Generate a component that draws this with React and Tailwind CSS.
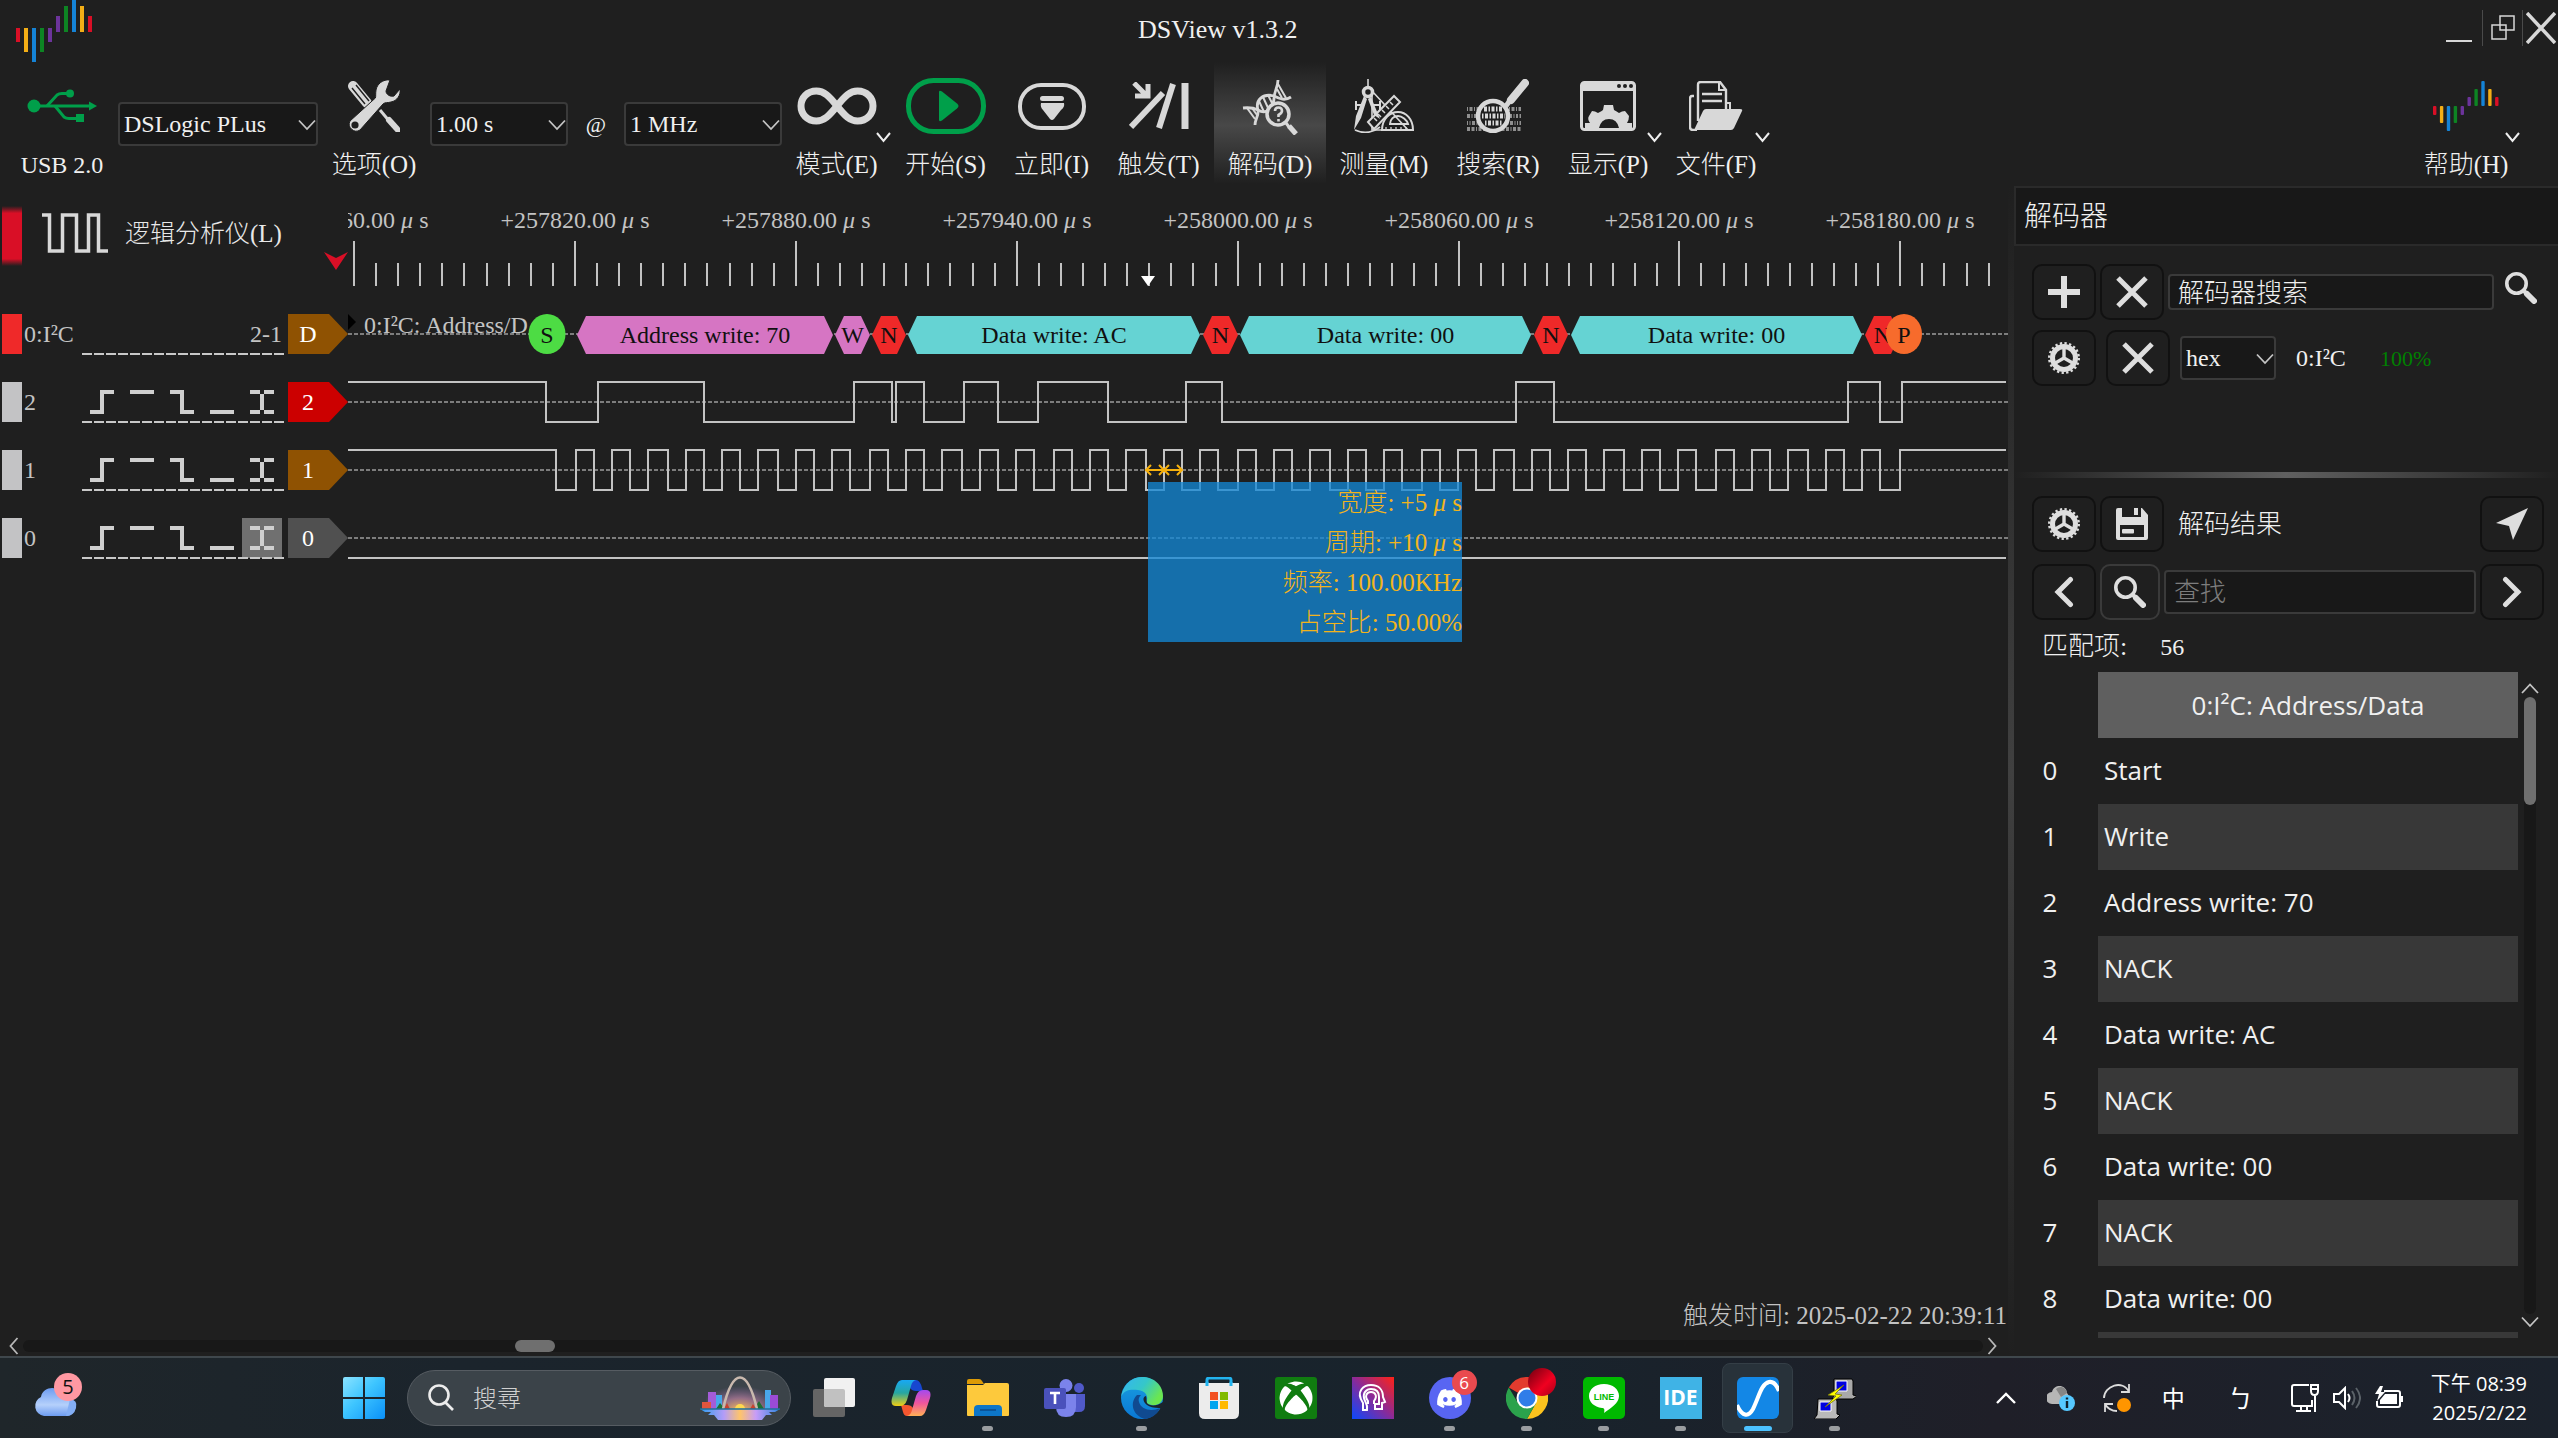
import React from "react";
import { FaDiscord, FaXbox } from "react-icons/fa6";

const SERIF = "font-['Liberation_Serif','Noto_Sans_CJK_SC',serif]";
const SANS = "font-['Open_Sans','Noto_Sans_CJK_TC',sans-serif]";
const FG = "#d8d8d8";

/* ---------- small shared drawings ---------- */

function Chevron({ className = "", dir = "down" }) {
  const d = {
    down: "M1 1.5 9 10l8-8.5",
    up: "M1 10 9 1.5l8 8.5",
    left: "M8.5 1 1.5 9l7 8",
    right: "M1.5 1l7 8-7 8",
  }[dir];
  const side = dir === "left" || dir === "right";
  return (
    <svg
      className={className}
      width={side ? 10 : 18}
      height={side ? 18 : 12}
      viewBox={side ? "0 0 10 18" : "0 0 18 12"}
      fill="none"
      stroke="currentColor"
      strokeWidth="1.800"
      aria-hidden="true"
    >
      <path d={d} />
    </svg>
  );
}

const LOGO_BARS = [
  ["#d90f26", 28, 14], ["#f3ae16", 28, 24], ["#1583d6", 28, 34], ["#0d8423", 28, 24], ["#6c349b", 28, 14],
  ["#6c349b", 16, 16], ["#0d8423", 6, 26], ["#1583d6", 0, 32], ["#f3ae16", 6, 26], ["#d90f26", 16, 16],
];

function Logo() {
  return (
    <svg width="78" height="62" viewBox="0 0 78 62" aria-label="DSView">
      {LOGO_BARS.map(([c, y, h], i) => (
        <rect key={i} x={i * 8} y={y} width="4" height={h} fill={c} />
      ))}
    </svg>
  );
}

const HELP_BARS = [
  ["#d90f26", 25, 9], ["#f3ae16", 25, 17], ["#1583d6", 25, 25], ["#0d8423", 25, 17], ["#6c349b", 25, 9],
  ["#6c349b", 16, 9], ["#0d8423", 8, 17], ["#1583d6", 0, 25], ["#f3ae16", 8, 17], ["#d90f26", 16, 9],
];

function HelpIcon() {
  return (
    <svg width="66" height="50" viewBox="0 0 66 50">
      {HELP_BARS.map(([c, y, h], i) => (
        <rect key={i} x={i * 6.9} y={y} width="3.4" height={h} rx="1" fill={c} />
      ))}
    </svg>
  );
}

function UsbIcon() {
  return (
    <svg width="70" height="34" viewBox="0 0 70 34" fill="none" stroke="#009f4a" strokeWidth="3">
      <circle cx="7" cy="17" r="6.5" fill="#009f4a" stroke="none" />
      <path d="M7 17h56" />
      <path d="M20 17 30 6q2-1.500 5-1.500h7" />
      <path d="M28 17 37 28q2 1.500 5 1.500h8" />
      <circle cx="43" cy="4.500" r="4" fill="#009f4a" stroke="none" />
      <path d="M49 25h8v8h-8z" fill="#009f4a" stroke="none" />
      <path d="M62 12.500 70 17l-8 4.500z" fill="#009f4a" stroke="none" />
    </svg>
  );
}

function ToolsIcon() {
  return (
    <svg width="52" height="52" viewBox="0 0 52 52">
      <g stroke={FG} fill="none">
        <path d="M5 6 19 23" strokeWidth="10" strokeLinecap="round" />
        <path d="M4 8 17 24M8 5l13 16" stroke="#1f1f1f" strokeWidth="1.400" />
        <path d="M32 30l10 12" strokeWidth="3" />
        <path d="M41 40l9 10" strokeWidth="6" strokeLinecap="round" />
      </g>
      <path
        d="M42 0c-7-1-13 4-14 10-.6 4 0 6-.6 8L2 41a7 7 0 0 0 10 9l23-26c2-2 5-1 8-2 6-1 10-7 9-13l-6 7c-3 1-8-1-8-5z"
        fill={FG}
        stroke="#1f1f1f"
        strokeWidth="1"
      />
      <circle cx="7" cy="45" r="3.600" fill="#1f1f1f" />
    </svg>
  );
}

function LoopIcon() {
  return (
    <svg width="80" height="38" viewBox="0 0 80 38" fill="none" stroke={FG} strokeWidth="7">
      <path d="M40 19C32 9 27 4 19.500 4 10 4 4 11 4 19s6 15 15.500 15C27 34 32 29 40 19S53 4 60.500 4C70 4 76 11 76 19s-6 15-15.500 15C53 34 48 29 40 19z" />
    </svg>
  );
}

function StartIcon() {
  return (
    <svg width="80" height="56" viewBox="0 0 80 56">
      <rect x="2.500" y="2.500" width="75" height="51" rx="25" fill="none" stroke="#009f4a" strokeWidth="5" />
      <path d="M33 14q0-2 3-.5l15 12q3 2.500 0 5l-15 12q-3 1.500-3-.5z" fill="#009f4a" />
    </svg>
  );
}

function InstantIcon() {
  return (
    <svg width="68" height="47" viewBox="0 0 68 47">
      <rect x="2" y="2" width="64" height="43" rx="21" fill="none" stroke={FG} strokeWidth="4" />
      <rect x="22" y="13" width="24" height="5" rx="2.500" fill={FG} />
      <path d="M23 20h23q1 4-3 7l-7 9q-2 2-4 0l-7-9q-3-3-2-7z" fill={FG} />
    </svg>
  );
}

function TriggerIcon() {
  return (
    <svg width="60" height="48" viewBox="0 0 60 48" stroke={FG} fill="none">
      <path d="M5 1 17 13M6 14h13V2" strokeWidth="5" />
      <path d="M2 45 34 11" strokeWidth="6" />
      <path d="M30 46 44 2" strokeWidth="6" />
      <path d="M56 1v46" strokeWidth="7" />
    </svg>
  );
}

function DecodeIcon() {
  return (
    <svg width="56" height="56" viewBox="0 0 56 56" stroke={FG} fill="none">
      <path d="M1 29q9-1 15 2c8 5 15-1 16-11 0-8 4-12 4-19" strokeWidth="2.800" />
      <path d="M13 46c0-6 4-9 3-15-3-10 5-17 16-14 6 3 11 5 17 1" strokeWidth="2.800" />
      <path d="M5 29l8 11M10 29l5 7M17 22l5 11M21 18l6 13M26 16l5 10M35 10l5 9M36 5l8 14" strokeWidth="2" />
      <circle cx="36" cy="35" r="11" fill="#3d3d3d" strokeWidth="3.500" />
      <path d="M44 44l3 4" strokeWidth="3" />
      <path d="M47 47l7 8" strokeWidth="5" />
      <path d="M33 32q0-3.500 3.500-3.500T40 32q0 2-3.500 4v2M36.500 40v2.500" strokeWidth="2.600" />
    </svg>
  );
}

function MeasureIcon() {
  return (
    <svg width="60" height="54" viewBox="0 0 60 54" stroke={FG} fill="none">
      <path d="M18 51V12L54 51z" strokeWidth="1.600" />
      <path d="M28 51c0-11 8-18 16-18s15 7 15 18z" strokeWidth="2" />
      <path d="M36 45c0-5 4-8 8-8s9 4 10 8z" strokeWidth="2" />
      <path d="M14 43 40 17l6 6-26 27z" strokeWidth="2" fill="#1f1f1f" />
      <path d="M20 39l3 3M24 35l3 3M28 31l3 3M32 27l3 3M36 23l3 3" strokeWidth="1.500" />
      <path d="M32 51v-3M37 51v-3M42 51v-3M47 51v-3M52 51v-3" strokeWidth="1.300" />
      <path d="M14 0v9" strokeWidth="1.600" />
      <circle cx="14" cy="13" r="4.500" strokeWidth="3.500" />
      <path d="M2 22v9M2 26h8M19 26h7M26 22v9" strokeWidth="2" />
      <path d="M10 17 2 37 0 51l7-12 6-19zM17 18l9 22-6-4-6-16z" fill={FG} stroke="none" />
      <path d="M1 51q13 6 25-3" strokeWidth="1.800" />
    </svg>
  );
}

function SearchDataIcon() {
  return (
    <svg width="62" height="54" viewBox="0 0 62 54">
      <g fill="none" stroke="#8f8f8f" strokeWidth="4">
        <path d="M0 30h54" strokeDasharray="1 1.500 3 1.500" />
        <path d="M0 37h54" strokeDasharray="3 1.500 1 1.500 2 1.500" />
        <path d="M0 44h54" strokeDasharray="1 1.500 1 1.500 3 1.500" />
        <path d="M0 50h54" strokeDasharray="3 1.500 3 1.500 1 1.500" />
      </g>
      <path d="M58 4 44 21" stroke={FG} strokeWidth="8" strokeLinecap="round" />
      <path d="M44 20l-5 7" stroke={FG} strokeWidth="5" />
      <circle cx="26" cy="37" r="15" fill="#1f1f1f" stroke={FG} strokeWidth="4.500" />
      <g fill="none" stroke={FG} strokeWidth="5">
        <path d="M17 30h19" strokeDasharray="3 1.500 1.500 1.500" />
        <path d="M15 37h23" strokeDasharray="1.500 1.500 3 1.500" />
        <path d="M18 44h18" strokeDasharray="1.500 1.500 3 1.500" />
      </g>
    </svg>
  );
}

function DisplayIcon() {
  return (
    <svg width="56" height="50" viewBox="0 0 56 50">
      <rect x="1.500" y="1.500" width="53" height="47" rx="3" fill="none" stroke={FG} strokeWidth="3" />
      <path d="M1 2h54v8H1z" fill={FG} />
      <g fill="#1f1f1f">
        <circle cx="39" cy="5" r="2" />
        <circle cx="45" cy="5" r="2" />
        <circle cx="51" cy="5" r="2" />
      </g>
      <path
        d="M5 47v-5h5q-3-4-1-7l3-5q3 0 6 2 4-2 5-3l1-5h9l1 5q2 1 5 3 3-2 6-2l4 5q0 4-2 7h5v5H39q-2-9-10-9t-10 9z"
        fill={FG}
      />
    </svg>
  );
}

function FileIcon() {
  return (
    <svg width="54" height="50" viewBox="0 0 54 50" fill="none" stroke={FG}>
      <path d="M5 15H3q-2 0-2 3v28q0 3 3 3h4" strokeWidth="2.400" />
      <path d="M9 40V4q0-3 3-3h19l6 8v19" strokeWidth="2.400" />
      <path d="M30 1v8h7" strokeWidth="2" />
      <path d="M13 13h20M13 20h20" strokeWidth="2.600" />
      <path d="M37 22h4v6" strokeWidth="2" />
      <path d="M17 28h34q3 0 2 2l-8 17q-1 2-3 2H7q-2 0-1-2l8-17q1-2 3-2z" fill={FG} stroke="none" />
    </svg>
  );
}

function Gear() {
  return (
    <svg width="32" height="32" viewBox="0 0 32 32" fill="none" stroke="#dedede">
      <circle cx="16" cy="16" r="14.800" strokeWidth="2.400" strokeDasharray="2.325 2.325" />
      <circle cx="16" cy="16" r="11.500" strokeWidth="5" />
      <path d="M16 16V5M16 16l9.500 5.500M16 16l-9.500 5.500" strokeWidth="3.400" />
    </svg>
  );
}

function Magnifier() {
  return (
    <svg width="32" height="32" viewBox="0 0 32 32" fill="none" stroke="#dedede">
      <circle cx="11.500" cy="11.500" r="9.700" strokeWidth="3.600" />
      <path d="M18 18l4 4" strokeWidth="4" />
      <path d="M22 22l7 7" strokeWidth="6" strokeLinecap="round" />
    </svg>
  );
}

function Cross() {
  return (
    <svg width="32" height="32" viewBox="0 0 32 32" stroke="#dedede" strokeWidth="5">
      <path d="M2 2l28 28M30 2 2 30" />
    </svg>
  );
}

function Plus() {
  return (
    <svg width="32" height="32" viewBox="0 0 32 32" stroke="#dedede" strokeWidth="6">
      <path d="M16 0v32M0 16h32" />
    </svg>
  );
}

function Angle({ flip }) {
  return (
    <svg width="20" height="32" viewBox="0 0 20 32" fill="none" stroke="#dedede" strokeWidth="5" strokeLinecap="round">
      <path d={flip ? "M3.500 3.500 16 16 3.500 28.500" : "M16.500 3.500 4 16l12.500 12.500"} />
    </svg>
  );
}

function SaveIcon() {
  return (
    <svg width="32" height="32" viewBox="0 0 32 32">
      <path d="M0 2q0-2 2-2h4v9h19V0h1l6 7v23q0 2-2 2H2q-2 0-2-2z" fill="#dedede" />
      <path d="M18 0h4v7h-4z" fill="#dedede" />
      <path d="M4 17h24v12H4z" fill="#1f1f1f" />
      <rect x="6" y="21" width="12" height="4.500" rx="1" fill="#dedede" />
    </svg>
  );
}

/* ---------- top of the window ---------- */

function TitleBar() {
  return (
    <header className="relative flex h-[60px] shrink-0 justify-between">
      <div className="h-[62px] pl-4">
        <Logo />
      </div>
      <h1 className={"absolute left-1/2 top-[14px] -translate-x-[141px] text-[26px] leading-[32px] " + SERIF}>
        DSView v1.3.2
      </h1>
      <div className="flex items-start text-[#d8d8d8]">
        <button aria-label="Minimize" className="flex h-[46px] w-[36px] items-end pb-[4px]">
          <span className="h-[2px] w-[26px] bg-[#d8d8d8]" />
        </button>
        <span className="mt-[10px] h-9 w-px bg-[#4a4a4a]" />
        <button aria-label="Restore" className="flex h-[56px] w-[39px] items-center justify-center">
          <svg width="24" height="26" viewBox="0 0 24 26" fill="none" stroke="#d8d8d8" strokeWidth="1.500">
            <path d="M9 1h14v14H9zM1 10h14v14H1z" />
          </svg>
        </button>
        <span className="mt-[10px] h-9 w-px bg-[#4a4a4a]" />
        <button aria-label="Close" className="flex h-[56px] w-[35px] items-center justify-center">
          <svg width="30" height="32" viewBox="0 0 30 32" stroke="#d8d8d8" strokeWidth="3.500">
            <path d="M1 1l28 30M29 1 1 31" />
          </svg>
        </button>
      </div>
    </header>
  );
}

function Combo({ label, value, width }) {
  return (
    <div className={"relative shrink-0 " + width}>
      <select
        aria-label={label}
        defaultValue={value}
        className="h-[44px] w-full appearance-none rounded-[4px] border-2 border-[#3a3a3a] bg-[#181818] pl-1 text-[24px] text-[#f0f0f0] outline-none"
      >
        <option>{value}</option>
      </select>
      <Chevron className="pointer-events-none absolute right-[2px] top-[17px] text-[#c4c4c4]" />
    </div>
  );
}

function ToolButton({ label, icon, width, menu, active }) {
  return (
    <button
      className={
        "relative flex h-[122px] shrink-0 flex-col items-center " +
        width +
        (active ? " bg-[linear-gradient(#1f1f1f,#484848_52%,#1f1f1f)] pt-[6px]" : " pt-1")
      }
    >
      <span className="flex h-[80px] items-center">{icon}</span>
      <span className="whitespace-nowrap text-[25px] leading-[38px]">{label}</span>
      {menu && (
        <svg className="absolute right-0 top-[70px]" width="15" height="11" viewBox="0 0 15 11" fill="none" stroke="#eee" strokeWidth="2">
          <path d="M1 1l6.500 8L14 1" />
        </svg>
      )}
    </button>
  );
}

function Toolbar() {
  return (
    <nav className={"flex h-[126px] shrink-0 items-start pt-[2px] " + SERIF}>
      <div className="flex h-[122px] w-[118px] shrink-0 flex-col items-center pl-[6px] pt-1">
        <span className="flex h-[80px] items-center">
          <UsbIcon />
        </span>
        <span className="text-[24px] leading-[38px]">USB 2.0</span>
      </div>
      <div className="flex shrink-0 items-start">
        <div className="pt-10">
          <Combo label="Device" value="DSLogic PLus" width="w-[200px]" />
        </div>
        <ToolButton label="选项(O)" icon={<ToolsIcon />} width="w-[112px]" />
        <div className="flex items-center pt-10">
          <Combo label="Sample duration" value="1.00 s" width="w-[138px]" />
          <span className="w-[56px] text-center text-[22px]">@</span>
          <Combo label="Sample rate" value="1 MHz" width="w-[158px]" />
        </div>
      </div>
      <ToolButton label="模式(E)" icon={<LoopIcon />} width="w-[109px]" menu />
      <ToolButton label="开始(S)" icon={<StartIcon />} width="w-[109px]" />
      <ToolButton label="立即(I)" icon={<InstantIcon />} width="w-[103px]" />
      <ToolButton label="触发(T)" icon={<TriggerIcon />} width="w-[111px]" />
      <ToolButton label="解码(D)" icon={<DecodeIcon />} width="w-[112px]" active />
      <ToolButton label="测量(M)" icon={<MeasureIcon />} width="w-[116px]" />
      <ToolButton label="搜索(R)" icon={<SearchDataIcon />} width="w-[112px]" />
      <ToolButton label="显示(P)" icon={<DisplayIcon />} width="w-[108px]" menu />
      <ToolButton label="文件(F)" icon={<FileIcon />} width="w-[108px]" menu />
      <div className="ml-auto pr-[38px]">
        <ToolButton label="帮助(H)" icon={<HelpIcon />} width="w-[108px]" menu />
      </div>
    </nav>
  );
}

/* ---------- channel list ---------- */

const TRIGGERS = [
  ["Rising edge", "M0 22h14M12 24V0M10 2h14"],
  ["High level", "M0 2h24"],
  ["Falling edge", "M0 2h14M12 0v24M10 22h14"],
  ["Low level", "M0 22h24"],
  ["Either edge", "M0 2h10M14 2h10M0 22h10M14 22h10M12 4v16"],
];

function ChannelRow({ name, note, tag, color, chip, selected }) {
  return (
    <div className="flex h-[68px] items-center pl-[2px]">
      <span className="h-[40px] w-5" style={{ backgroundColor: chip }} />
      <span className="w-[60px] whitespace-nowrap pl-[2px] text-[24px]">{name}</span>
      <span className="relative flex h-[40px] w-[202px] items-center">
        {note ? (
          <span className="ml-auto pr-[2px] text-[24px]">{note}</span>
        ) : (
          TRIGGERS.map(([title, d], i) => (
            <button
              key={title}
              aria-label={title + " " + tag}
              className={"flex h-[40px] w-[40px] items-center justify-center " + (selected === i ? "bg-[#707070]" : "")}
            >
              <svg width="24" height="24" viewBox="0 0 24 24" stroke="#cfcfcf" strokeWidth="4" fill="none">
                <path d={d} />
              </svg>
            </button>
          ))
        )}
        <svg className="absolute -bottom-px left-0 h-[2px] w-full">
          <path d="M0 1h202" stroke="#c8c8c8" strokeWidth="2" strokeDasharray="10 2" />
        </svg>
      </span>
      <span className="relative ml-1 flex h-[40px] w-[60px] items-center text-white">
        <svg className="absolute inset-0" width="60" height="40" viewBox="0 0 60 40">
          <path d="M0 0h41l19 20-19 20H0z" fill={color} />
        </svg>
        <span className="relative w-[40px] text-center text-[24px]">{tag}</span>
      </span>
    </div>
  );
}

function ChannelList() {
  return (
    <div className="w-[348px] shrink-0 text-[#c3c3c3]">
      <div className="relative flex h-[114px] items-start pl-[2px] pt-[20px]">
        <span className="h-[60px] w-5 bg-[linear-gradient(#1f1f1f,#d90f26_12%,#d90f26_88%,#1f1f1f)]" />
        <svg className="ml-5 mt-[7px]" width="66" height="40" viewBox="0 0 66 40" fill="none" stroke="#d8d8d8" strokeWidth="3.500">
          <path d="M0 2h7.500v36h13V2h14v36h12V2h10v36H66" />
        </svg>
        <button className="ml-[17px] mt-[9px] whitespace-nowrap text-[25px] leading-[38px] text-[#e8e8e8]">逻辑分析仪(L)</button>
        <svg className="absolute right-0 top-[66px]" width="24" height="18" viewBox="0 0 24 18">
          <path d="M0 0l12 6 12-6-12 18z" fill="#d90f26" />
        </svg>
      </div>
      <ChannelRow name="0:I²C" note="2-1" tag="D" color="#8f5202" chip="#ef2929" />
      <ChannelRow name="2" tag="2" color="#cc0000" chip="#c3c3c5" />
      <ChannelRow name="1" tag="1" color="#8f5202" chip="#c3c3c5" />
      <ChannelRow name="0" tag="0" color="#505050" chip="#c3c3c5" selected={4} />
    </div>
  );
}

/* ---------- ruler and traces ---------- */

const TICK_START = 6;
const TICK_STEP = 22.09;
const RULER_LABELS = [
  "+257760.00", "+257820.00", "+257880.00", "+257940.00", "+258000.00", "+258060.00", "+258120.00", "+258180.00",
];

const SDA = [198, 250, 356, 506, 544, 548, 576, 616, 650, 690, 760, 838, 874, 1168, 1206, 1500, 1532, 1554];
const SCL = [
  208, 228, 246, 264, 282, 300, 320, 338, 356, 374, 392, 410, 430, 448, 466, 484, 502, 522, 540, 558, 576, 594, 614,
  632, 650, 668, 686, 706, 724, 742, 760, 778, 798, 816, 834, 852, 870, 890, 908, 926, 944, 962, 982, 1000, 1018, 1036,
  1054, 1074, 1092, 1110, 1128, 1146, 1166, 1184, 1202, 1220, 1238, 1256, 1276, 1294, 1312, 1330, 1348, 1368, 1386,
  1404, 1422, 1440, 1460, 1478, 1496, 1514, 1532, 1552,
];

const TRACE_END = 1658;

function tracePath(edges, high) {
  let d = "M0 " + high;
  edges.forEach((x, i) => {
    d += "H" + x + "V" + (i % 2 === 0 ? high + 40 : high);
  });
  return d + "H" + TRACE_END;
}

const PINK = "#d675c3";
const TEAL = "#65d3d3";
const RED = "#ef2929";
const FRAMES = [
  [229, 485, "Address write: 70", PINK],
  [487, 522, "W", PINK],
  [524, 558, "N", RED],
  [560, 852, "Data write: AC", TEAL],
  [855, 890, "N", RED],
  [892, 1183, "Data write: 00", TEAL],
  [1186, 1220, "N", RED],
  [1223, 1514, "Data write: 00", TEAL],
  [1517, 1552, "N", RED],
];

function Frame({ x1, x2, text, fill }) {
  return (
    <g>
      <path d={`M${x1} 149l9-19H${x2 - 9}l9 19-9 19H${x1 + 9}z`} fill={fill} />
      <text x={(x1 + x2) / 2} y="157" textAnchor="middle" fontSize="24" fill="#101010">
        {text}
      </text>
    </g>
  );
}

function Waveform() {
  return (
    <svg className="block h-[460px] w-full">
      <g stroke="#c3c3c3" strokeWidth="2">
        {Array.from({ length: 75 }, (_, i) => {
          const x = Math.round(TICK_START + i * TICK_STEP);
          return <path key={i} d={`M${x} ${i % 10 === 0 ? 55 : 77}V100`} />;
        })}
      </g>
      <g fill="#c3c3c3" fontSize="24">
        {RULER_LABELS.map((t, i) => (
          <text key={t} x={Math.round(TICK_START + i * 10 * TICK_STEP)} y="42" textAnchor="middle">
            {t} <tspan fontStyle="italic">μ</tspan> s
          </text>
        ))}
      </g>
      <path d="M793 90h14l-7 10z" fill="#fff" />

      <g stroke="#7d7d7d" strokeWidth="2" strokeDasharray="4 2">
        <path d="M0 148H1660" />
        <path d="M0 216H1660" />
        <path d="M0 284H1660" />
        <path d="M0 352H1660" />
      </g>
      <g fill="none" stroke="#c3c3c3" strokeWidth="2">
        <path d={tracePath(SDA, 196)} />
        <path d={tracePath(SCL, 264)} />
        <path d={`M0 372H${TRACE_END}`} />
      </g>

      <path d="M0 128l8 8-8 8z" fill="#000" />
      <text x="16" y="147" fontSize="24" fill="#c3c3c3">0:I²C: Address/D</text>
      <ellipse cx="199" cy="148" rx="18.500" ry="20" fill="#4ddc44" />
      <text x="199" y="157" textAnchor="middle" fontSize="24" fill="#101010">S</text>
      {FRAMES.map(([x1, x2, text, fill]) => (
        <Frame key={x1} x1={x1} x2={x2} text={text} fill={fill} />
      ))}
      <ellipse cx="1556" cy="148" rx="18" ry="20" fill="#f76b2c" />
      <text x="1556" y="157" textAnchor="middle" fontSize="24" fill="#101010">P</text>

      <g fill="none" stroke="#f7b10e" strokeWidth="2">
        <path d="M798 284h36M803 279l-5 5 5 5M811 279l5 5-5 5M821 279l-5 5 5 5M829 279l5 5-5 5" />
      </g>
    </svg>
  );
}

function Scope() {
  return (
    <section className={"flex min-w-0 flex-1 flex-col " + SERIF}>
      <div className="flex min-h-0 flex-1">
        <ChannelList />
        <div className="relative min-w-0 flex-1">
          <Waveform />
          <div className="absolute left-[800px] top-[296px] h-[160px] w-[314px] bg-[rgb(18,135,214)]/77 pt-px text-right text-[25px] leading-[40px] text-[#f2b41c]">
            <p>宽度: +5 <i>μ</i> s</p>
            <p>周期: +10 <i>μ</i> s</p>
            <p>频率: 100.00KHz</p>
            <p>占空比: 50.00%</p>
          </div>
        </div>
      </div>
      <p className="pr-px text-right text-[25px] leading-[40px] text-[#c3c3c3]">触发时间: 2025-02-22 20:39:11</p>
      <div className="flex h-[20px] items-center gap-[4px] pl-[9px] pr-[11px] text-[#b8b8b8]">
        <Chevron dir="left" />
        <div className="flex h-[12px] min-w-0 flex-1 rounded-full bg-[#181818]">
          <div className="ml-[25.1%] h-[12px] w-10 rounded-[6px] bg-[#6f6f6f]" />
        </div>
        <Chevron dir="right" />
      </div>
    </section>
  );
}

/* ---------- decoder panel ---------- */

function IconButton({ label, children, width = "w-[64px]", border = "border-[#111]" }) {
  return (
    <button
      aria-label={label}
      className={"flex h-[56px] shrink-0 items-center justify-center rounded-[10px] border-2 " + width + " " + border}
    >
      {children}
    </button>
  );
}

const ROWS = [
  "Start", "Write", "Address write: 70", "NACK", "Data write: AC", "NACK", "Data write: 00", "NACK", "Data write: 00", "",
];

function DecoderPanel() {
  return (
    <aside className={"flex w-[544px] shrink-0 flex-col " + SERIF}>
      <h2 className="h-[60px] shrink-0 border-2 border-r-0 border-[#2a2a2a] bg-[#181818] pl-2 text-[28px] leading-[58px]">
        解码器
      </h2>
      <div className="flex h-[226px] shrink-0 flex-col gap-[10px] pl-[18px] pr-[14px] pt-[18px]">
        <div className="flex items-center gap-1">
          <IconButton label="Add decoder"><Plus /></IconButton>
          <IconButton label="Remove all decoders"><Cross /></IconButton>
          <input
            aria-label="解码器搜索"
            defaultValue="解码器搜索"
            className="h-[36px] min-w-0 flex-1 rounded-[4px] border-2 border-[#3a3a3a] bg-[#181818] px-2 pt-[2px] text-[26px] text-[#f0f0f0] outline-none"
          />
          <button aria-label="Search decoder" className="flex h-[56px] w-[46px] items-start justify-center pt-2">
            <Magnifier />
          </button>
        </div>
        <div className="flex items-center gap-[10px]">
          <IconButton label="Decoder settings"><Gear /></IconButton>
          <IconButton label="Remove decoder"><Cross /></IconButton>
          <Combo label="Format" value="hex" width="w-[96px]" />
          <span className="w-[84px] pl-[10px] text-[24px]">0:I²C</span>
          <span className="text-[22px] text-[#008000]">100%</span>
        </div>
      </div>
      <div className="h-[6px] shrink-0 bg-[linear-gradient(90deg,#1f1f1f,#606060_50%,#1f1f1f)]" />
      <div className="flex shrink-0 flex-col gap-[12px] pl-[18px] pr-[14px] pt-[18px]">
        <div className="flex items-center gap-1">
          <IconButton label="Result settings"><Gear /></IconButton>
          <IconButton label="Save results"><SaveIcon /></IconButton>
          <span className="flex-1 pl-[10px] text-[26px]">解码结果</span>
          <IconButton label="Jump to">
            <svg width="32" height="32" viewBox="0 0 32 32">
              <path d="M32 0 0 15l13 3 4 14z" fill="#dedede" />
            </svg>
          </IconButton>
        </div>
        <div className="flex items-center gap-1">
          <IconButton label="Previous match"><Angle /></IconButton>
          <IconButton label="Find" width="w-[60px]" border="border-[#3a3a3a]"><Magnifier /></IconButton>
          <input
            aria-label="查找"
            placeholder="查找"
            className="h-[44px] min-w-0 flex-1 rounded-[4px] border-2 border-[#3a3a3a] bg-[#181818] px-2 pt-[2px] text-[26px] outline-none placeholder:text-[#7d7d7d]"
          />
          <IconButton label="Next match"><Angle flip /></IconButton>
        </div>
      </div>
      <p className="h-[52px] shrink-0 pl-[28px] pt-1 text-[26px] leading-[46px]">
        匹配项:<span className="pl-[33px] text-[24px]">56</span>
      </p>
      <div className="mb-[18px] flex min-h-0 flex-1 overflow-hidden pl-[18px]">
        <table className={"flex-1 table-fixed border-collapse self-start text-[26px] font-normal " + SANS}>
          <colgroup>
            <col className="w-[66px]" />
            <col />
          </colgroup>
          <thead>
            <tr className="h-[66px]">
              <th />
              <th scope="col" className="bg-[#5f5f5f] text-center font-normal">0:I²C: Address/Data</th>
            </tr>
          </thead>
          <tbody>
            {ROWS.map((text, i) => (
              <tr key={i} className="h-[66px]">
                <th scope="row" className="pb-[2px] pr-[30px] text-center font-normal">{i < 9 ? i : ""}</th>
                <td className={"pb-[2px] pl-[6px] " + (i % 2 ? "bg-[#383838]" : "")}>{text}</td>
              </tr>
            ))}
          </tbody>
        </table>
        <div className="flex w-[40px] flex-col items-center pb-[10px] pr-[16px] pt-[11px] text-[#c4c4c4]">
          <Chevron dir="up" className="shrink-0" />
          <div className="my-[2px] w-[12px] flex-1 rounded-full bg-[#181818]">
            <div className="h-[108px] w-[12px] rounded-full bg-[#6f6f6f]" />
          </div>
          <Chevron className="shrink-0" />
        </div>
      </div>
    </aside>
  );
}

/* ---------- taskbar ---------- */

function WeatherIcon() {
  return (
    <svg width="52" height="46" viewBox="0 0 52 46">
      <defs>
        <linearGradient id="cl" x1="0" y1="0" x2="0" y2="1">
          <stop offset="0" stopColor="#6d9cf0" />
          <stop offset=".6" stopColor="#b5d0fb" />
          <stop offset="1" stopColor="#6d9cf0" />
        </linearGradient>
      </defs>
      <path d="M10 44a10 10 0 0 1-3-19C9 13 28 13 30 26a9 9 0 0 1 4 18z" fill="url(#cl)" />
      <path d="M36 27q8 1 6 9t-10 8" fill="#83aef5" />
      <circle cx="34" cy="15" r="14" fill="#ff98a2" />
      <text x="34" y="22" textAnchor="middle" fontSize="20" fill="#111">5</text>
    </svg>
  );
}

function StartLogo() {
  return (
    <svg width="42" height="42" viewBox="0 0 42 42">
      <defs>
        <linearGradient id="st" x1="0" y1="0" x2="1" y2="1">
          <stop offset="0" stopColor="#8be3ff" />
          <stop offset=".45" stopColor="#3ec5ff" />
          <stop offset="1" stopColor="#0a90f8" />
        </linearGradient>
      </defs>
      <path d="M2 0h18v20H0V2q0-2 2-2zM22 0h18q2 0 2 2v18H22zM0 22h20v20H2q-2 0-2-2zM22 22h20v18q0 2-2 2H22z" fill="url(#st)" />
    </svg>
  );
}

function ArchPicture() {
  return (
    <svg width="80" height="44" viewBox="0 0 80 44">
      <defs>
        <radialGradient id="glow" cx=".5" cy=".8" r=".6">
          <stop offset="0" stopColor="#ffc24d" />
          <stop offset=".5" stopColor="#b97fa0" stopOpacity=".7" />
          <stop offset="1" stopColor="#8a6aa8" stopOpacity="0" />
        </radialGradient>
        <linearGradient id="lake" x1="0" x2="1">
          <stop offset="0" stopColor="#2a9df0" />
          <stop offset=".3" stopColor="#b49cf8" />
          <stop offset=".5" stopColor="#ffc46a" />
          <stop offset=".7" stopColor="#c69cf8" />
          <stop offset="1" stopColor="#2a86e0" />
        </linearGradient>
      </defs>
      <ellipse cx="40" cy="22" rx="34" ry="20" fill="url(#glow)" />
      <path d="M8 16h8v17H8z" fill="#a45cd8" />
      <path d="M16 19h6v14h-6z" fill="#49a7ea" />
      <path d="M2 26h9v7H2z" fill="#e0553e" />
      <path d="M65 14h6v19h-6z" fill="#49a7ea" />
      <path d="M70 19h8v14h-8z" fill="#9b4bd6" />
      <path d="M16 33l4-6 5 6zM54 33l5-8 5 8z" fill="#1f6e33" />
      <path d="M24 33l3-6 3 6zM50 33l3-5 3 5z" fill="#c8412f" />
      <path d="M35 33a5 5 0 0 1 10 0z" fill="#ffd84f" />
      <path d="M23 33C28 12 34 1.500 40 1.500S52 12 57 33" fill="none" stroke="#c9b9ae" strokeWidth="2.600" />
      <path d="M0 33h80l-5 3h-6l3 3h-6l-4 5H18l-4-5H8l3-3H5z" fill="url(#lake)" />
      <path d="M0 33h80" stroke="#1c6f99" strokeWidth="1.500" />
    </svg>
  );
}

function TaskView() {
  return (
    <svg width="42" height="40" viewBox="0 0 42 40">
      <rect x="0" y="11" width="32" height="28" rx="2" fill="#656565" />
      <rect x="11" y="0" width="31" height="29" rx="2" fill="#f1f1f1" />
      <path d="M11 11h19q2 0 2 2v16H13q-2 0-2-2z" fill="#c1c1c1" />
    </svg>
  );
}

function Copilot() {
  return (
    <svg width="40" height="38" viewBox="0 0 40 38">
      <defs>
        <linearGradient id="cpa" x1="0" y1="0" x2="0" y2="1">
          <stop offset="0" stopColor="#18a8f5" />
          <stop offset=".5" stopColor="#27a6a0" />
          <stop offset="1" stopColor="#f2cf12" />
        </linearGradient>
        <linearGradient id="cpb" x1="0" y1="0" x2="0" y2="1">
          <stop offset="0" stopColor="#a44af0" />
          <stop offset=".5" stopColor="#f0559c" />
          <stop offset="1" stopColor="#ffb055" />
        </linearGradient>
      </defs>
      <path d="M18 1h7q4 0 6 8l1 3h-7q-4 0-6-3z" fill="#1747d0" />
      <path d="M22 37h-6q-3 0-4-4l-2-7h6q4 0 6 3z" fill="#f4562f" />
      <path d="M11 1h14q-4 1-5 6l-4 14q-2 6-7 6H5q-6 0-4-8l4-12q2-6 6-6z" fill="url(#cpa)" />
      <path d="M29 37H16q4-1 5-6l4-14q2-6 7-6h3q6 0 4 8l-4 12q-2 6-6 6z" fill="url(#cpb)" />
    </svg>
  );
}

function Explorer() {
  return (
    <svg width="42" height="38" viewBox="0 0 42 38">
      <path d="M0 2q0-2 2-2h10q2 0 3 2l2 3H0z" fill="#dc9a06" />
      <path d="M0 6h16l2-2h22q2 0 2 2v30q0 1-1 1H1q-1 0-1-1z" fill="#fdc93c" />
      <path d="M7 37v-7q0-4 4-4h20q4 0 4 4v7z" fill="#0d76c8" />
      <path d="M13 31h16" stroke="#0a559a" strokeWidth="2" />
    </svg>
  );
}

function Teams() {
  return (
    <svg width="42" height="38" viewBox="0 0 42 38">
      <circle cx="35" cy="9" r="5" fill="#5059c9" />
      <path d="M30 15h11v12q0 6-6 6h-5z" fill="#5059c9" />
      <circle cx="22" cy="6.500" r="6.500" fill="#7b83eb" />
      <path d="M12 15h20v13q0 10-10 10T12 28z" fill="#7b83eb" />
      <rect x="0" y="9" width="22" height="21" rx="2" fill="#4a51bb" />
      <path d="M6 14h10M11 14v11" stroke="#fff" strokeWidth="2.600" />
    </svg>
  );
}

function Edge() {
  return (
    <svg width="42" height="42" viewBox="0 0 42 42">
      <defs>
        <linearGradient id="ea" x1="0" y1="0" x2="1" y2=".5">
          <stop offset="0" stopColor="#35b4f3" />
          <stop offset=".55" stopColor="#35c7c9" />
          <stop offset="1" stopColor="#6be650" />
        </linearGradient>
        <linearGradient id="eb" x1="0" y1="0" x2="0" y2="1">
          <stop offset="0" stopColor="#1a9fe0" />
          <stop offset="1" stopColor="#0a78d4" />
        </linearGradient>
      </defs>
      <circle cx="21" cy="21" r="21" fill="url(#eb)" />
      <path d="M1 16C4 6 12 0 21 0c12 0 21 8 21 19 0 7-6 10-11 9-6-1-6-3-5-5 1-5-2-9-9-10C9 12 3 13 0 20z" fill="url(#ea)" />
      <path d="M16 18c-8 8-4 21 8 24 8-1 13-6 15-11-8 4-19 2-21-6-1-3 0-5 2-7z" fill="#104a90" />
      <path d="M26 28c-4-3-5-8-1-9 1 3 0 4 1 7 2 3 9 4 16-1v6H38q-8 0-12-3z" fill="#1b242b" />
    </svg>
  );
}

function Store() {
  return (
    <svg width="42" height="42" viewBox="0 0 42 42">
      <path d="M9 9V3q0-2 2-2h20q2 0 2 2v6" fill="none" stroke="#22b4f0" strokeWidth="3" />
      <path d="M1 6h40v30q0 6-6 6H7q-6 0-6-6z" fill="#ececec" />
      <path d="M9 9V5M33 9V5" stroke="#22b4f0" strokeWidth="3" />
      <path d="M12 15h8v8h-8z" fill="#f25022" />
      <path d="M22 15h8v8h-8z" fill="#7fba00" />
      <path d="M12 24h8v8h-8z" fill="#00a4ef" />
      <path d="M22 24h8v8h-8z" fill="#ffb900" />
    </svg>
  );
}

function Xbox() {
  return (
    <span className="flex h-[42px] w-[42px] items-center justify-center rounded-[3px] bg-[#107c10]">
      <FaXbox size={34} color="#fff" />
    </span>
  );
}

function HeadApp() {
  return (
    <svg width="42" height="42" viewBox="0 0 42 42">
      <defs>
        <linearGradient id="ha" x1="0" y1="1" x2="1" y2="0">
          <stop offset="0" stopColor="#0a49ff" />
          <stop offset=".5" stopColor="#8a2a98" />
          <stop offset="1" stopColor="#ff2216" />
        </linearGradient>
      </defs>
      <path d="M0 0h42v42H0z" fill="url(#ha)" />
      <g fill="none" stroke="#fff" strokeWidth="2">
        <path d="M11 33V26C3 14 12 8 19 8c8 0 12 5 12 12l2 5-3 1v6h-7v-5h4V20c0-5-3-8-8-8s-8 4-7 9 4 5 3 12z" />
        <path d="M16 27v-3c-4-5-1-9 3-9s7 4 3 9v3" />
      </g>
    </svg>
  );
}

function Discord() {
  return (
    <span className="relative flex h-[42px] w-[42px] items-center justify-center rounded-full bg-[#5865f2]">
      <FaDiscord size={27} color="#fff" />
      <span className="absolute -right-[6px] -top-[7px] flex h-[25px] w-[25px] items-center justify-center rounded-full bg-[#ea4a4f] text-[17px] text-white">
        6
      </span>
    </span>
  );
}

function Chrome() {
  return (
    <span className="relative block h-[42px] w-[42px]">
      <svg width="42" height="42" viewBox="0 0 42 42">
        <path d="M21 21 2.800 10.500A21 21 0 0 1 39.200 10.500z" fill="#e33b2e" />
        <path d="M21 10.500H39.200A21 21 0 0 1 21 42l9-16z" fill="#fcc31e" />
        <path d="M2.800 10.500A21 21 0 0 0 21 42l9-16H12z" fill="#2ba24c" />
        <circle cx="21" cy="21" r="10.500" fill="#fff" />
        <circle cx="21" cy="21" r="8.500" fill="#2f7de9" />
      </svg>
      <span className="absolute -right-[8px] -top-[9px] h-[28px] w-[28px] rounded-full bg-[linear-gradient(135deg,#6d0010,#f00020_60%,#a80018)]" />
    </span>
  );
}

function LineApp() {
  return (
    <svg width="42" height="42" viewBox="0 0 42 42" className="font-['Liberation_Sans',sans-serif]">
      <rect width="42" height="42" rx="5" fill="#00b900" />
      <path d="M21 7c9 0 15 5.500 15 12 0 7-8 12-15 17 1-4 0-5-2-5-8-1-13-6-13-12C6 12.500 12 7 21 7z" fill="#fff" />
      <text x="21" y="23" textAnchor="middle" fontSize="9" fontWeight="bold" fill="#00b900">LINE</text>
    </svg>
  );
}

function IdeApp() {
  return (
    <span className="flex h-[42px] w-[42px] items-center justify-center bg-[#3fb3e6] text-[21px] font-bold text-white">IDE</span>
  );
}

function DsApp() {
  return (
    <svg width="42" height="42" viewBox="0 0 42 42">
      <rect width="42" height="42" rx="6" fill="#1387e6" />
      <path d="M0 28c5 11 11 13 16 4 6-12 8-25 16-27 5-1 8 4 10 9" fill="none" stroke="#fff" strokeWidth="4" />
    </svg>
  );
}

function Putty() {
  return (
    <svg width="42" height="42" viewBox="0 0 42 42">
      <path d="M20 2h18l1 2v14l4 1-4 3H18l2-3z" fill="#a9a9a9" stroke="#000" />
      <path d="M22 4h11v10H22z" fill="#0000e0" stroke="#fff" />
      <path d="M4 22h18l1 2v13l3 1-4 4H0l3-4z" fill="#b9b9b9" stroke="#000" />
      <path d="M6 25h11v9H6z" fill="#0000e0" stroke="#fff" />
      <path d="M30 8 14 18l8 1-11 11 17-12-7-1z" fill="#ffff00" stroke="#77770a" strokeWidth=".8" />
    </svg>
  );
}

const APPS = [
  ["Task view", TaskView, ""],
  ["Copilot", Copilot, ""],
  ["File Explorer", Explorer, "open"],
  ["Teams", Teams, ""],
  ["Edge", Edge, "open"],
  ["Microsoft Store", Store, ""],
  ["Xbox", Xbox, ""],
  ["Voice app", HeadApp, ""],
  ["Discord", Discord, "open"],
  ["Chrome", Chrome, "open"],
  ["LINE", LineApp, "open"],
  ["IDE", IdeApp, "open"],
  ["DSView", DsApp, "active"],
  ["PuTTY", Putty, "open"],
];

function AppButton({ label, Icon, state }) {
  return (
    <button
      aria-label={label}
      className={
        "relative mx-[3px] flex h-[70px] w-[71px] items-center justify-center rounded-[8px] " +
        (state === "active" ? "border border-[#343e46] bg-[#28323a]" : "")
      }
    >
      <Icon />
      {state === "open" && <span className="absolute bottom-[2px] h-[5px] w-[11px] rounded-full bg-[#9a9da0]" />}
      {state === "active" && <span className="absolute bottom-[1px] h-[5px] w-[28px] rounded-full bg-[#4cc2ff]" />}
    </button>
  );
}

function Tray() {
  return (
    <div className="ml-auto flex h-full shrink-0 items-center text-white">
      <button aria-label="Show hidden icons" className="flex w-[42px] justify-center">
        <svg width="20" height="12" viewBox="0 0 20 12" fill="none" stroke="#fff" strokeWidth="2.400">
          <path d="M1 11l9-9 9 9" />
        </svg>
      </button>
      <button aria-label="OneDrive" className="ml-[20px]">
        <svg width="28" height="28" viewBox="0 0 28 28">
          <path d="M5 20a6 6 0 0 1 0-12C7 0 19 0 20 9l4 6-10 5z" fill="#b6b6b6" />
          <path d="M9 5c4-4 10-2 11 4l-6 4z" fill="#858585" />
          <circle cx="20" cy="19" r="8" fill="#56c8ff" />
          <path d="M20 17v7M20 13.500v2" stroke="#10202c" strokeWidth="2.400" />
        </svg>
      </button>
      <button aria-label="Windows Update" className="ml-[28px]">
        <svg width="28" height="30" viewBox="0 0 28 30" fill="none" stroke="#dcdcdc" strokeWidth="1.800">
          <path d="M1 15C1 3 20-4 26 9M26 1v8h-8M2 29v-8h8M2 21q4 7 12 7" />
          <circle cx="21" cy="22" r="7" fill="#ff9500" stroke="none" />
        </svg>
      </button>
      <button className="ml-[31px] text-[23px] leading-[28px]">中</button>
      <button className="ml-[43px] text-[25px] leading-[28px]">ㄅ</button>
      <button aria-label="Network, volume and battery" className="ml-[38px] flex items-center gap-[14px]">
        <svg width="28" height="30" viewBox="0 0 28 30" fill="none" stroke="#fff" strokeWidth="2">
          <path d="M18 2H3Q1 2 1 4v17q0 2 2 2h18v-6M10 23v5M16 23v5M5 28h15M20 2h7v6q0 4-3.500 4T20 8zM24 12v17M20 6h7" />
        </svg>
        <svg width="28" height="24" viewBox="0 0 28 24" fill="none" stroke="#fff" strokeWidth="2">
          <path d="M1 8h5l6-6v20l-6-6H1zM15 8q3 4 0 8" />
          <path d="M19 5q5 7 0 14M23 2q8 10 0 20" stroke="#5b6268" />
        </svg>
        <svg width="28" height="28" viewBox="0 0 28 28" fill="none" stroke="#fff" strokeWidth="2">
          <path d="M9 7h14q2 0 2 2v12q0 2-2 2H4q-2 0-2-2v-4" />
          <path d="M10 10h12v10H5v-4z" fill="#fff" stroke="none" />
          <path d="M26 12h2v6h-2zM5 2l-5 8h4l-2 7 8-9H6l2-6z" fill="#fff" stroke="none" />
        </svg>
      </button>
      <button className="ml-[28px] pr-[31px] text-right text-[20px] leading-[29px]">
        <span className="block">下午 08:39</span>
        <span className="block">2025/2/22</span>
      </button>
    </div>
  );
}

function Taskbar() {
  return (
    <footer
      className={
        "flex h-[82px] shrink-0 items-center border-t-2 border-[#3f474c] bg-[linear-gradient(90deg,#1f262a,#1b242c_18%,#18232c_60%,#1f1f28_78%,#1b222c)] font-normal " +
        SANS
      }
    >
      <button aria-label="Weather" className="w-[300px] shrink-0 pb-[6px] pl-[34px]">
        <WeatherIcon />
      </button>
      <div className="ml-[43px] flex h-full shrink-0 items-center">
        <button aria-label="Start">
          <StartLogo />
        </button>
        <label className="ml-[22px] mr-1 flex h-[56px] w-[384px] items-center rounded-full border border-[#565c62] bg-[#3b4349] pl-[20px] pr-[10px]">
          <svg width="27" height="28" viewBox="0 0 27 28" fill="none" stroke="#ececec" strokeWidth="2.600">
            <circle cx="11" cy="11" r="9.500" />
            <path d="M17 18l8 8" />
          </svg>
          <input
            aria-label="搜尋"
            placeholder="搜尋"
            className="ml-[18px] min-w-0 flex-1 bg-transparent text-[24px] font-light outline-none placeholder:text-[#d0d0d0]"
          />
          <ArchPicture />
        </label>
        <div className="flex">
          {APPS.map(([label, Icon, state]) => (
            <AppButton key={label} label={label} Icon={Icon} state={state} />
          ))}
        </div>
      </div>
      <Tray />
    </footer>
  );
}

export default function App() {
  return (
    <div className={"flex h-screen flex-col overflow-hidden bg-[#1f1f1f] font-light text-[#f0f0f0] " + SERIF}>
      <TitleBar />
      <Toolbar />
      <main className="flex min-h-0 flex-1">
        <Scope />
        <div className="w-[6px] shrink-0 bg-[linear-gradient(#1f1f1f,#404040_50%,#1f1f1f)]" />
        <DecoderPanel />
      </main>
      <Taskbar />
    </div>
  );
}
